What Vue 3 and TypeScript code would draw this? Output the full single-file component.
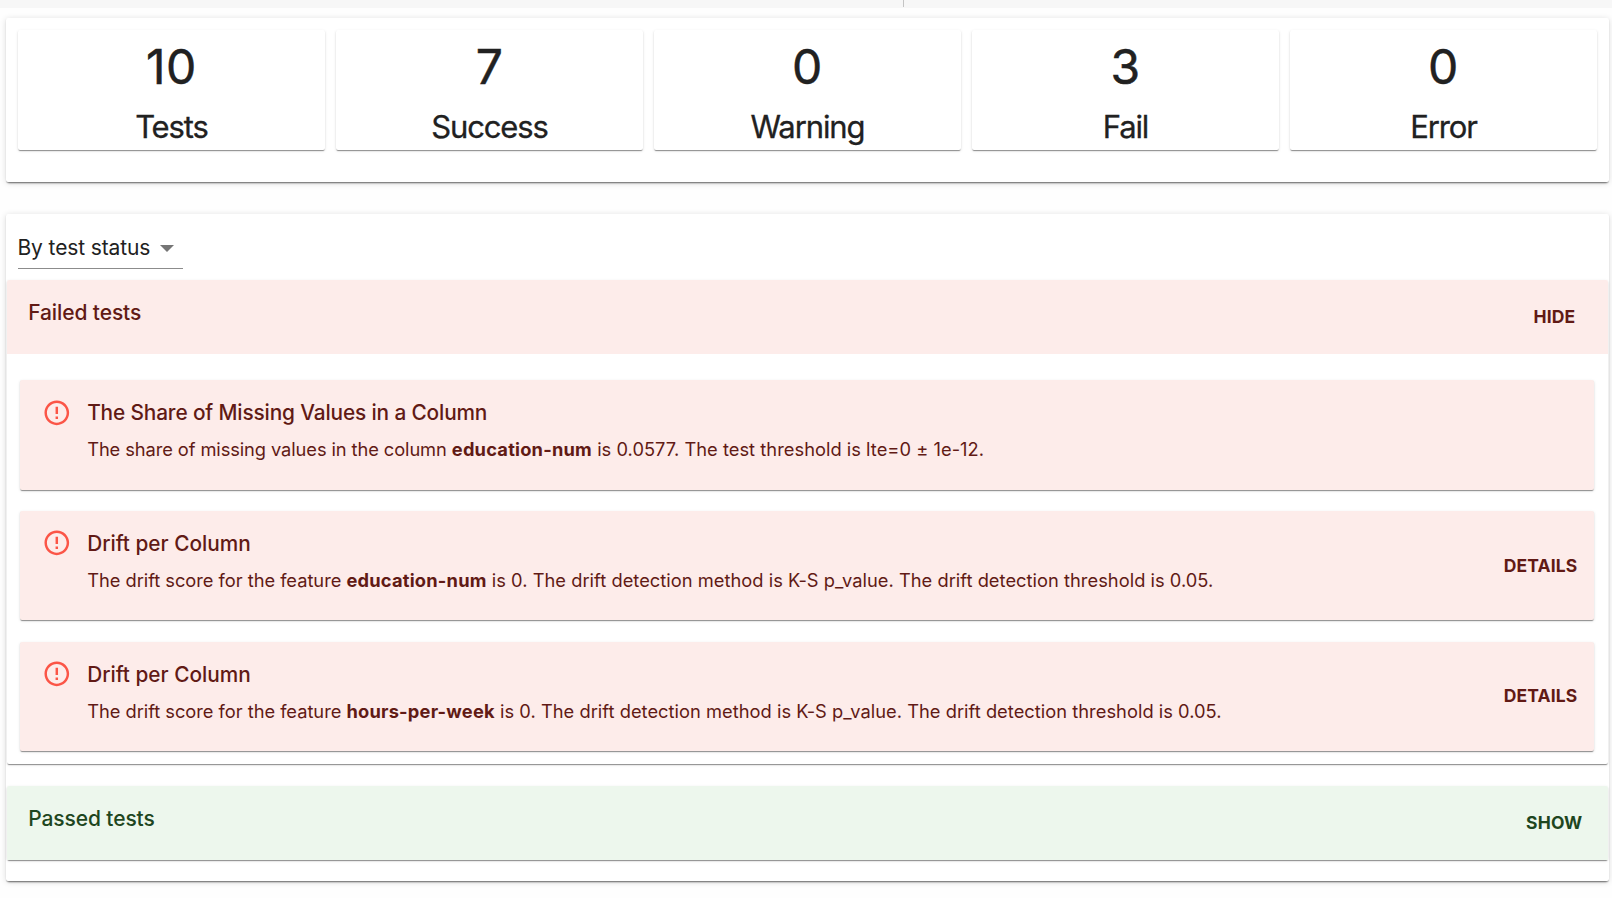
<script setup lang="ts">
interface Stat { value: number; label: string }
interface FailedTest { title: string; lead: string; column: string; tail: string; details: boolean }

const stats: Stat[] = [
  { value: 10, label: 'Tests' },
  { value: 7, label: 'Success' },
  { value: 0, label: 'Warning' },
  { value: 3, label: 'Fail' },
  { value: 0, label: 'Error' },
]

const driftTail = ' is 0. The drift detection method is K-S p_value. The drift detection threshold is 0.05.'

const failed: FailedTest[] = [
  {
    title: 'The Share of Missing Values in a Column',
    lead: 'The share of missing values in the column ',
    column: 'education-num',
    tail: ' is 0.0577. The test threshold is lte=0 ± 1e-12.',
    details: false,
  },
  { title: 'Drift per Column', lead: 'The drift score for the feature ', column: 'education-num', tail: driftTail, details: true },
  { title: 'Drift per Column', lead: 'The drift score for the feature ', column: 'hours-per-week', tail: driftTail, details: true },
]
</script>

<template>
  <div class="page">
    <div class="strip"><span class="tick"></span></div>

    <section class="panel summary">
      <div v-for="s in stats" :key="s.label" class="stat">
        <div class="value">{{ s.value }}</div>
        <div class="label">{{ s.label }}</div>
      </div>
    </section>

    <section class="panel results">
      <div class="select">
        <span>By test status</span>
        <svg class="arrow" viewBox="0 0 14 7"><path d="M0 0h14L7 7z" /></svg>
      </div>

      <div class="group">
        <header class="head error">
          <h2 class="title">Failed tests</h2>
          <button class="action">HIDE</button>
        </header>
        <div class="items">
          <article v-for="(t, i) in failed" :key="i" class="item error" :class="{ drift: t.details }">
            <svg class="icon" viewBox="0 0 24 24">
              <path d="M11 15h2v2h-2zm0-8h2v6h-2zm.99-5C6.47 2 2 6.48 2 12s4.47 10 9.99 10C17.52 22 22 17.52 22 12S17.52 2 11.99 2zM12 20c-4.42 0-8-3.58-8-8s3.58-8 8-8 8 3.58 8 8-3.58 8-8 8z" />
            </svg>
            <div class="message">
              <h3 class="title">{{ t.title }}</h3>
              <p class="text"><span class="lead">{{ t.lead }}</span><b>{{ t.column }}</b><span class="tail">{{ t.tail }}</span></p>
            </div>
            <button v-if="t.details" class="action">DETAILS</button>
          </article>
        </div>
      </div>

      <div class="group passed">
        <header class="head success">
          <h2 class="title">Passed tests</h2>
          <button class="action">SHOW</button>
        </header>
      </div>
    </section>
  </div>
</template>

<style>
html, body { background: #fefefe; }
</style>

<style scoped>
.page {
  box-sizing: border-box;
  width: 1612px;
  height: 898px;
  overflow: hidden;
  font-family: Inter, "Liberation Sans", sans-serif;
  color: #212121;
}
.page * { box-sizing: border-box; margin: 0; }
.strip { height: 8px; background: #f7f7f7; }
.page .tick { display: block; width: 1px; height: 7px; margin-left: 903px; background: #c4c4c4; }
.page .panel {
  margin: 10px 3px 0 6px;
  background: #fff;
  border-radius: 2px;
  box-shadow: 0 3px 2px -2px rgba(0, 0, 0, .4), 0 1px 1px rgba(0, 0, 0, .24), 0 1px 6px rgba(0, 0, 0, .14);
}
.summary { display: flex; gap: 11px; height: 164px; padding: 12px 12px 0; }
.stat {
  flex: 1;
  height: 120px;
  padding-top: 8.5px;
  text-align: center;
  background: #fff;
  border-radius: 2px;
}
.stat, .group, .item {
  box-shadow: 0 2px 1px -1px rgba(0, 0, 0, .26), 0 1px 1px rgba(0, 0, 0, .18), 0 1px 3px rgba(0, 0, 0, .12);
}
.value { font-size: 48px; line-height: 56px; letter-spacing: .5px; -webkit-text-stroke: .5px currentColor; }
.page .label { margin-top: 8px; font-size: 31px; line-height: 48px; letter-spacing: -1.1px; -webkit-text-stroke: .3px currentColor; }
.page .results { height: 667px; margin-top: 32px; padding-top: 17px; }
.page .select {
  display: flex;
  width: 165px;
  height: 38px;
  margin: 0 0 11px 12px;
  border-bottom: 1px solid #8c8c8c;
  font-size: 21px;
  line-height: 33px;
  letter-spacing: -.12px;
  white-space: nowrap;
}
.select span { width: 142px; margin-left: -.5px; }
.page .arrow { flex: none; width: 14px; height: 7px; margin-top: 14px; fill: #757575; }
.page .group { margin: 0 .6px 0 1px; background: #fff; border-radius: 2px; }
.page .passed { margin-top: 22px; }
.head { display: flex; justify-content: space-between; height: 74px; padding: 0 33px 0 21.2px; border-radius: 2px 2px 0 0; }
.page .head .title { margin-top: 17.4px; letter-spacing: -.1px; }
.head .action { align-self: center; }
.error { background: #fdecea; color: #611a15; }
.success { background: #edf7ed; color: #1e4620; padding-right: 26px; }
.items { display: flex; flex-direction: column; gap: 21.2px; padding: 26px 14px 12.8px 12.5px; }
.item { display: flex; height: 109.6px; padding: 0 17px 0 22.2px; border-radius: 2px; }
.page .icon { flex: none; width: 29.6px; height: 29.6px; margin: 17.5px 15.9px 0 0; fill: #fb5547; }
.message { flex: 1; padding-top: 17.4px; white-space: nowrap; }
.title { font-size: 21px; font-weight: 500; line-height: 32px; }
.message .title { font-size: 20.8px; letter-spacing: -.13px; }
.drift .message .title { letter-spacing: 0; }
.page .message .text { margin-top: 6px; font-size: 18.3px; line-height: 28px; white-space: pre; }
.lead { letter-spacing: -.09px; }
.drift .lead { letter-spacing: -.03px; }
.tail { letter-spacing: .03px; }
.text b { font-weight: 700; letter-spacing: .2px; }
.action {
  align-self: center;
  padding: 0;
  border: 0;
  background: none;
  color: inherit;
  font: 700 17.5px/30px Inter, "Liberation Sans", sans-serif;
  letter-spacing: .15px;
}
</style>
